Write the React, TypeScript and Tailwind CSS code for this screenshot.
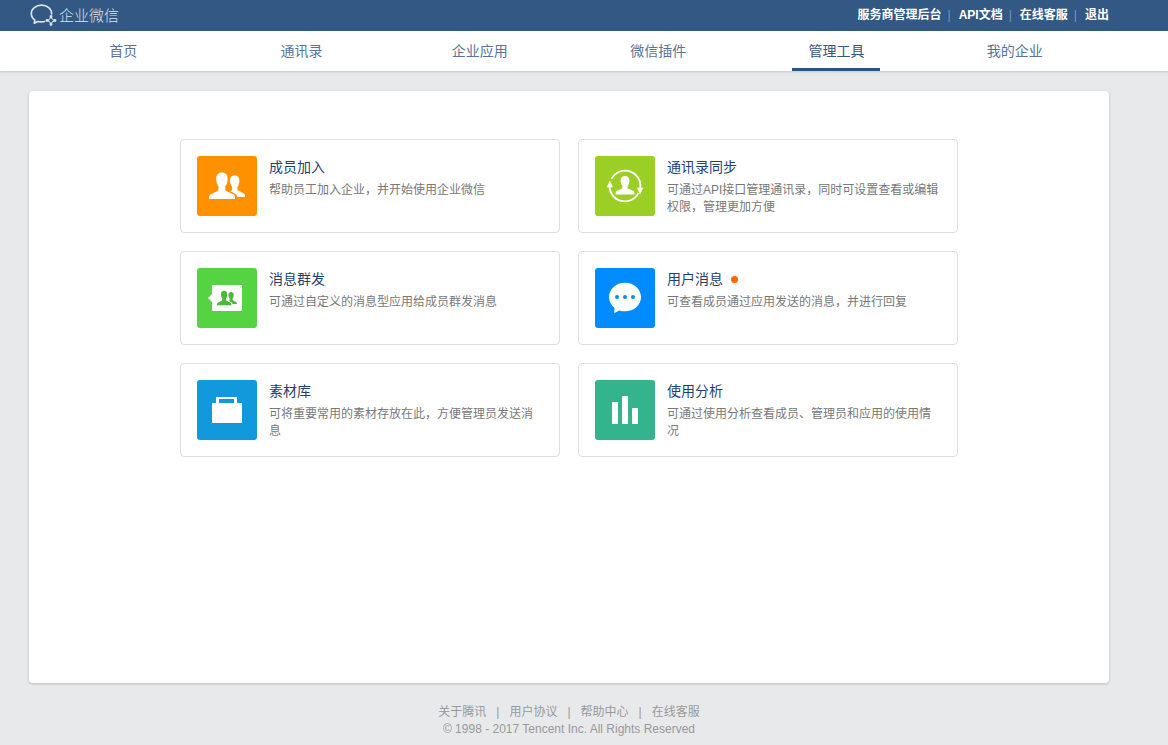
import type { ReactNode } from "react";

interface Tool {
  title: string;
  description: string;
  tile: string;
  icon: ReactNode;
  unread?: boolean;
}

const topLinks = ["服务商管理后台", "API文档", "在线客服", "退出"];

const navItems = [
  "首页",
  "通讯录",
  "企业应用",
  "微信插件",
  "管理工具",
  "我的企业",
];

const footerLinks = ["关于腾讯", "用户协议", "帮助中心", "在线客服"];

function PeopleShape() {
  return (
    <>
      <path d="M24.900 16.600c3.700 0 5.700 2.500 5.700 6 0 3.400-.7 6-2.300 7.700v3.200c0 .7.300 1.100 1 1.400l6.900 3.300c1.200.6 1.800 1.500 1.800 2.800v2H12v-2c0-1.300.6-2.200 1.800-2.800l6.700-3.300c.7-.3 1-.7 1-1.400v-3.200c-1.600-1.700-2.300-4.300-2.300-7.700 0-3.500 2-6 5.700-6z" />
      <path d="M37.600 19.300c3.100 0 4.800 2.100 4.800 5.100 0 2.900-.7 5.100-2 6.600v2.400c0 .6.300.9.900 1.200l5.200 2.600c1 .5 1.500 1.200 1.500 2.300v1.500h-7.600c-.4-1.800-1.400-3-3-3.800l-3.800-1.800 1-.8c.4-.3.500-.6.500-1.200V31c-1.300-1.500-2.100-3.700-2.100-6.600 0-3 1.700-5.100 4.600-5.100z" />
    </>
  );
}

function MembersIcon() {
  return (
    <svg viewBox="0 0 60 60" className="size-full fill-white" aria-hidden="true">
      <PeopleShape />
    </svg>
  );
}

function SyncIcon() {
  return (
    <svg viewBox="0 0 60 60" className="size-full fill-white" aria-hidden="true">
      <g fill="none" stroke="#fff" strokeWidth="1.800">
        <path d="M16.600 22.800A15.300 15.300 0 0 1 45.300 32" />
        <path d="M43.400 37.200A15.300 15.300 0 0 1 14.700 28" />
      </g>
      <path d="M14.900 24.500l3.200 6.800h-6.400z" />
      <path d="M45.100 38.500l3.200-6.800h-6.400z" />
      <path d="M30 20c2.900 0 4.400 1.900 4.400 4.500 0 2.400-.6 4.200-1.800 5.400v1.700c0 .5.200.8.800 1.100l4.500 2c1 .4 1.500 1 1.500 2v1.700H20.600v-1.700c0-1 .5-1.600 1.500-2l4.500-2c.6-.3.800-.6.800-1.100v-1.700c-1.200-1.200-1.800-3-1.800-5.400 0-2.600 1.500-4.500 4.400-4.500z" />
    </svg>
  );
}

function BroadcastIcon() {
  return (
    <svg viewBox="0 0 60 60" className="size-full fill-white" aria-hidden="true">
      <path d="M16 17h28a1 1 0 0 1 1 1v24a1 1 0 0 1-1 1H16a1 1 0 0 1-1-1v-8l-4-4 4-4v-8a1 1 0 0 1 1-1z" />
      <g fill="#4ab93a" transform="translate(13.4 13.500) scale(.55)">
        <PeopleShape />
      </g>
    </svg>
  );
}

function ChatIcon() {
  return (
    <svg viewBox="0 0 60 60" className="size-full fill-white" aria-hidden="true">
      <path d="M30 14.700c8.900 0 16 6.300 16 14.300s-7.100 14.300-16 14.300c-2 0-4-.3-5.800-.9L19.300 45.200l.2-5.200C16.200 37.300 14 33.300 14 29c0-8 7.100-14.300 16-14.300z" />
      <g fill="#008cff">
        <circle cx="22" cy="29" r="2" />
        <circle cx="30" cy="29" r="2" />
        <circle cx="38" cy="29" r="2" />
      </g>
    </svg>
  );
}

function BriefcaseIcon() {
  return (
    <svg viewBox="0 0 60 60" className="size-full fill-white" aria-hidden="true">
      <path d="M15 23h4v-6h21v6h5v20H15zM22 19v4h15v-4z" fillRule="evenodd" />
    </svg>
  );
}

function ChartIcon() {
  return (
    <svg viewBox="0 0 60 60" className="size-full fill-white" aria-hidden="true">
      <rect x="17" y="22" width="6" height="22" rx=".6" />
      <rect x="27" y="16" width="6" height="28" rx=".6" />
      <rect x="37" y="28" width="6" height="16" rx=".6" />
    </svg>
  );
}

function LogoMark() {
  return (
    <svg
      viewBox="0 0 28 23"
      className="h-[23px] w-7"
      fill="none"
      stroke="#dbe3ee"
      strokeWidth="1.700"
      strokeLinejoin="round"
      strokeLinecap="round"
      aria-hidden="true"
    >
      <path d="M22.600 9.800v-.4c0-4.600-4.300-8.200-10-8.200S2.300 4.800 2.300 9.400c0 2.700 1.300 5 3.500 6.500l-.5 3.300 3.600-1.700c1.200.3 2.400.4 3.700.4 1.100 0 2.100-.1 3-.4" />
      <path strokeWidth="1.200" d="M22 12.700q.6 3 3.800 3.800-3.200.8-3.800 3.800-.6-3-3.800-3.800 3.200-.8 3.800-3.800z" />
      <g fill="#dbe3ee" stroke="none">
        <circle cx="22" cy="12.500" r="1.400" />
        <circle cx="26" cy="16.500" r="1.400" />
        <circle cx="22" cy="20.500" r="1.400" />
        <circle cx="18" cy="16.500" r="1.400" />
      </g>
      <path fill="#335883" stroke="none" d="M22 14.300l2.200 2.200-2.200 2.200-2.200-2.200z" />
    </svg>
  );
}

const tools: Tool[] = [
  {
    title: "成员加入",
    description: "帮助员工加入企业，并开始使用企业微信",
    tile: "bg-[#ff9100]",
    icon: <MembersIcon />,
  },
  {
    title: "通讯录同步",
    description: "可通过API接口管理通讯录，同时可设置查看或编辑权限，管理更加方便",
    tile: "bg-[#9bcf26]",
    icon: <SyncIcon />,
  },
  {
    title: "消息群发",
    description: "可通过自定义的消息型应用给成员群发消息",
    tile: "bg-[#56d342]",
    icon: <BroadcastIcon />,
  },
  {
    title: "用户消息",
    description: "可查看成员通过应用发送的消息，并进行回复",
    tile: "bg-[#008cff]",
    icon: <ChatIcon />,
    unread: true,
  },
  {
    title: "素材库",
    description: "可将重要常用的素材存放在此，方便管理员发送消息",
    tile: "bg-[#1299dc]",
    icon: <BriefcaseIcon />,
  },
  {
    title: "使用分析",
    description: "可通过使用分析查看成员、管理员和应用的使用情况",
    tile: "bg-[#34b48d]",
    icon: <ChartIcon />,
  },
];

function ToolCard({ tool }: { tool: Tool }) {
  return (
    <a
      href="#"
      className="flex gap-3 rounded border border-[#dce0e4] p-4 hover:border-[#b8c2cc]"
    >
      <div className={`size-[60px] shrink-0 overflow-hidden rounded-[3px] ${tool.tile}`}>
        {tool.icon}
      </div>
      <div className="min-w-0 flex-1">
        <h2 className="mb-1 flex items-center gap-2 text-sm leading-[22px] text-[#1f4272]">
          {tool.title}
          {tool.unread && <span className="size-[7px] rounded-full bg-[#ff6600]" />}
        </h2>
        <p className="text-xs leading-[17px] text-[#787878]">{tool.description}</p>
      </div>
    </a>
  );
}

export default function App() {
  return (
    <div className="flex min-h-screen flex-col bg-[#e8e9eb] font-['Liberation_Sans','Noto_Sans_CJK_SC',sans-serif]">
      <header className="bg-[#335883] pr-[59px] pl-[29px]">
        <div className="flex h-[31px] items-center justify-between">
          <a href="#" className="flex items-center gap-0.5 text-[15px] leading-5 font-light text-[#dbe3ee]">
            <LogoMark />
            企业微信
          </a>
          <ul className="flex items-center pb-0.5 text-xs leading-4">
            {topLinks.map((link, i) => (
              <li key={link} className="flex items-center">
                {i > 0 && <span className="mr-2 ml-1.5 text-[#7f97b3]">|</span>}
                <a href="#" className="font-bold text-white">
                  {link}
                </a>
              </li>
            ))}
          </ul>
        </div>
      </header>

      <nav className="bg-white pr-[59px] pl-[29px] shadow-[0_1px_2px_rgba(0,0,0,0.15)]">
        <ul className="grid h-10 grid-cols-6 px-[5px]">
          {navItems.map((item) => (
            <li key={item} className="flex justify-center">
              <a
                href="#"
                className={`border-b-[3px] px-4 pt-[3px] text-sm leading-[34px] ${
                  item === "管理工具"
                    ? "border-[#2b5384] text-[#335883]"
                    : "border-transparent text-[#587498]"
                }`}
              >
                {item}
              </a>
            </li>
          ))}
        </ul>
      </nav>

      <main className="flex flex-1 flex-col pt-5 pr-[59px] pl-[29px]">
        <div className="flex-1 rounded bg-white px-6 pt-12 pb-12 shadow-[0_1px_3px_rgba(0,0,0,0.2)]">
          <div className="mx-auto grid max-w-[778px] grid-cols-2 gap-[18px]">
            {tools.map((tool) => (
              <ToolCard key={tool.title} tool={tool} />
            ))}
          </div>
        </div>
      </main>

      <footer className="pt-[21px] pr-[59px] pb-[7px] pl-[29px] text-center text-xs leading-[17px] text-[#999]">
        <ul className="flex justify-center">
          {footerLinks.map((link, i) => (
            <li key={link}>
              {i > 0 && <span className="mx-[10px]">|</span>}
              <a href="#">{link}</a>
            </li>
          ))}
        </ul>
        <p>© 1998 - 2017 Tencent Inc. All Rights Reserved</p>
      </footer>
    </div>
  );
}
